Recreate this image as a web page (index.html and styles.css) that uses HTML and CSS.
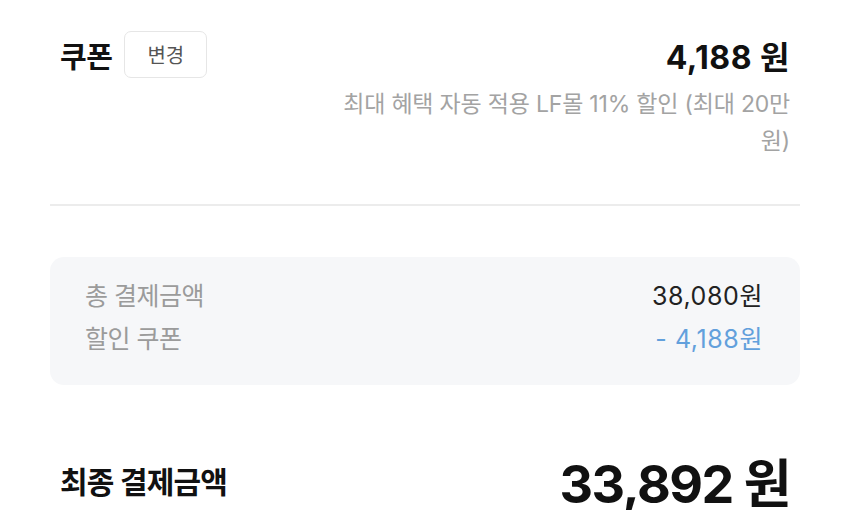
FILE: index.html
```html
<!DOCTYPE html>
<html lang="ko">
<head>
  <meta charset="UTF-8">
  <title>결제</title>
  <link rel="stylesheet" href="styles.css">
</head>
<body>
  <div class="checkout">

    <section class="coupon">
      <div class="coupon-head">
        <div class="coupon-title">
          <h3>쿠폰</h3>
          <button type="button" class="btn-change">변경</button>
        </div>
        <div class="coupon-amount">4,188 원</div>
      </div>
      <p class="coupon-desc">최대 혜택 자동 적용 LF몰 11% 할인 (최대 20만 원)</p>
    </section>

    <hr class="divider">

    <!-- 금액 요약 -->
    <div class="summary">
      <div class="summary-row">
        <span class="label">총 결제금액</span>
        <span class="value">38,080원</span>
      </div>
      <div class="summary-row">
        <span class="label">할인 쿠폰</span>
        <span class="value discount">- 4,188원</span>
      </div>
    </div>

    <div class="total">
      <span class="total-label">최종 결제금액</span>
      <span class="total-value">33,892 원</span>
    </div>

  </div>
</body>
</html>
```

FILE: styles.css
```css
* {
  box-sizing: border-box;
  font-family: Inter, 'Noto Sans CJK KR', sans-serif;
}

body {
  margin: 0;
  background: #ffffff;
  color: #111;
}

.checkout {
  padding: 31px 50px 0;
}

.coupon {
  padding: 0 10px 0 10px;
}

.coupon-head {
  display: flex;
  justify-content: space-between;
  align-items: center;
  height: 47px;
}

.coupon-title {
  display: flex;
  align-items: center;
  gap: 12px;
}

.coupon-title h3 {
  margin: 0;
  font-size: 29px;
  font-weight: 700;
  letter-spacing: -0.5px;
}

.btn-change {
  width: 83px;
  height: 47px;
  background: #fff;
  border: 1.5px solid #e6e6e6;
  border-radius: 7px;
  font-size: 20px;
  color: #555;
  cursor: pointer;
}

.coupon-amount {
  font-size: 32px;
  font-weight: 700;
  letter-spacing: 0.5px;
}

.coupon-desc {
  margin: 8px 0 0 auto;
  max-width: 480px;
  text-align: right;
  font-size: 23px;
  line-height: 37px;
  color: #a3a3a3;
  letter-spacing: -0.2px;
}

.divider {
  margin: 44px 0 0;
  border: none;
  height: 2px;
  background: #ececec;
}

.summary {
  margin-top: 51px;
  padding: 18px 37px 24px 35px;
  background: #f6f7f9;
  border-radius: 14px;
}

.summary-row {
  display: flex;
  justify-content: space-between;
  align-items: center;
  line-height: 43px;
}

.label {
  font-size: 25px;
  color: #9b9b9b;
  letter-spacing: -0.5px;
}

.value {
  font-size: 25px;
  color: #222;
  letter-spacing: 0.6px;
}

.value.discount {
  color: #62a0dc;
}

.total {
  display: flex;
  justify-content: space-between;
  align-items: center;
  margin-top: 65px;
  padding: 0 10px;
  height: 60px;
}

.total-label {
  font-size: 30px;
  font-weight: 700;
  letter-spacing: -0.8px;
}

.total-value {
  font-size: 52px;
  font-weight: 700;
  letter-spacing: -1.5px;
}
```
